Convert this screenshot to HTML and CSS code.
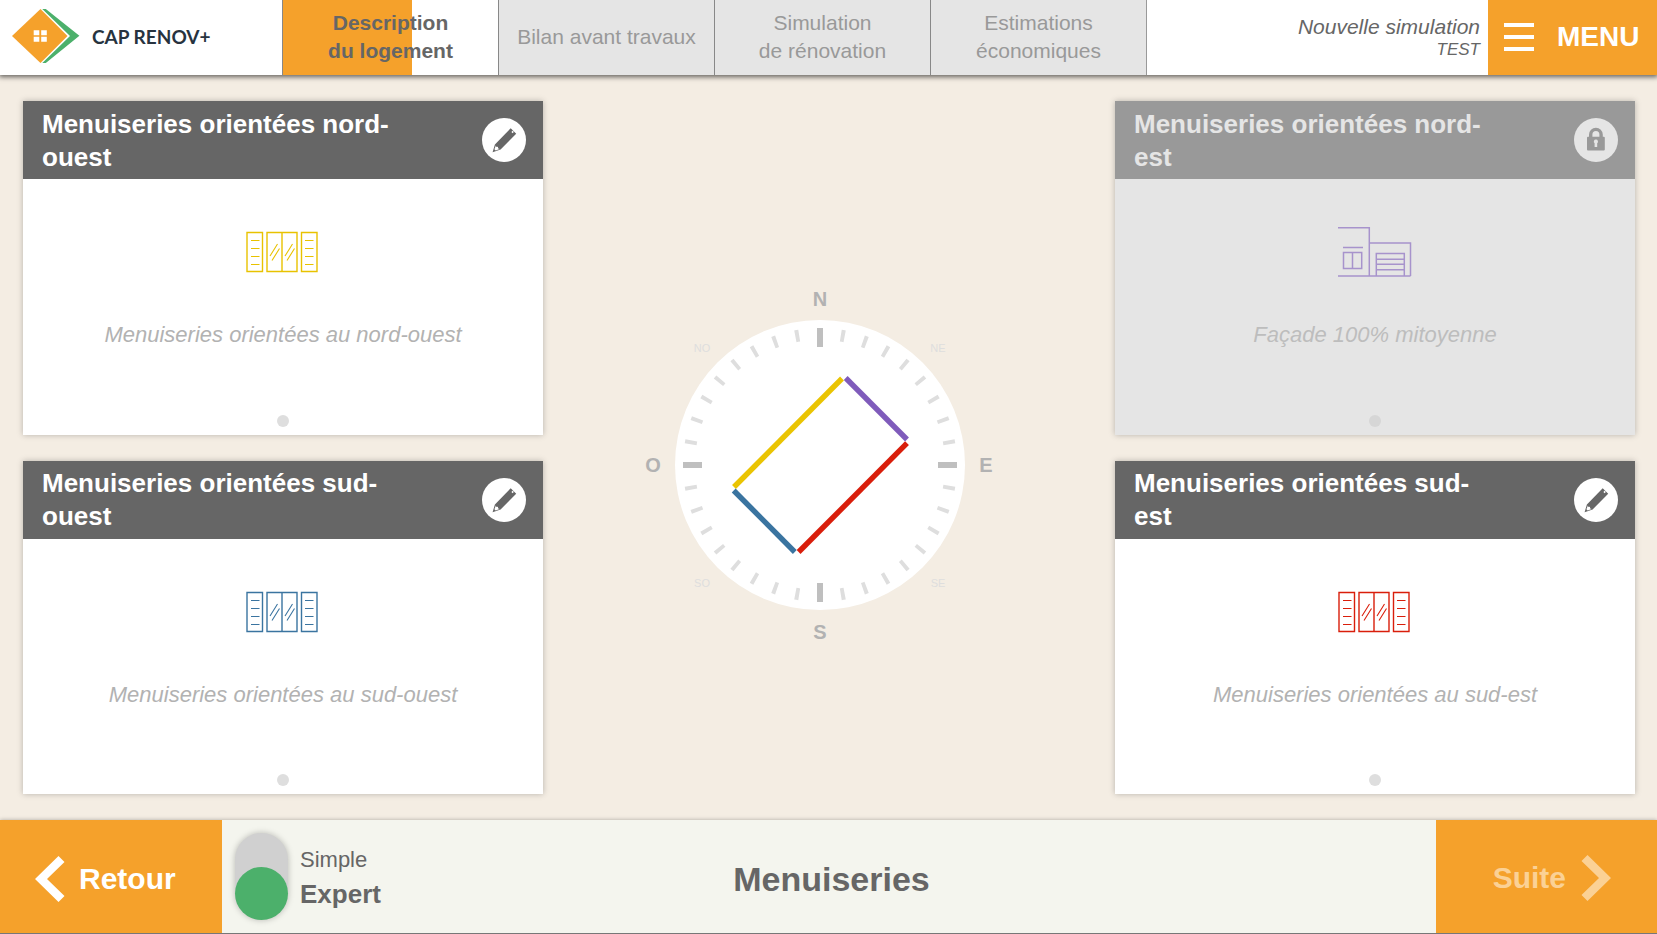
FILE: index.html
```html
<!DOCTYPE html>
<html lang="fr">
<head>
<meta charset="utf-8">
<meta name="viewport" content="width=device-width, initial-scale=1">
<title>CAP RENOV+ – Menuiseries</title>
<link rel="stylesheet" href="styles.css">
</head>
<body>
<svg class="sprite" aria-hidden="true">
  <symbol id="pencil" viewBox="0 0 44 44">
    <path fill="currentColor" fill-rule="evenodd" d="M28.7 10.2 34.2 15.8 18.6 31.6 10.6 34.2 12.9 26.4ZM13.9 27.4 12.4 31.2 13.7 32.5 17.6 31 16.2 30.6 15.9 28.8 14.4 28.9ZM30.6 12.8 29.4 14 30.6 15.2 31.8 14Z"/>
  </symbol>
  <symbol id="lock" viewBox="0 0 44 44">
    <path fill="none" stroke="currentColor" stroke-width="3.4" d="M16.7 20V16.6a5.2 5.2 0 0 1 10.4 0V20"/>
    <path fill="currentColor" fill-rule="evenodd" d="M14 18.8H29.8a1 1 0 0 1 1 1V31.4a1 1 0 0 1-1 1H14a1 1 0 0 1-1-1V19.8a1 1 0 0 1 1-1ZM21.9 21.6a2 2 0 0 0-1.3 3.6V29h2.6V25.2a2 2 0 0 0-1.3-3.6Z"/>
  </symbol>
  <symbol id="window" viewBox="0 0 76 52">
    <g fill="none" stroke="currentColor" stroke-width="1.4">
      <path d="M2 5.5H17.5V44.5H2ZM22 5.5H52V44.5H22ZM37 5.5V44.5M56.5 5.5H72V44.5H56.5Z"/>
      <path stroke-width="1.1" d="M6 13.5h8.5M6 21.5h8.5M6 29.5h8.5M6 37.5h8.5M60 13.5h8.5M60 21.5h8.5M60 29.5h8.5M60 37.5h8.5M25 29 32.5 17M27 33.5 34.5 21.5M40 29 47.5 17M42 33.5 49.5 21.5"/>
    </g>
  </symbol>
  <symbol id="garage" viewBox="0 0 76 52">
    <path fill="none" stroke="currentColor" stroke-width="1.5" d="M1 .8H32.3V49M32.3 16H73.5V49M1 49H73.5M6 20.5H26M6.5 25.5H24.7V41.5H6.5ZM15.5 25.5V41.5M39.3 49V26.5H67.3V49M39.3 32.3H67.3M39.3 37.3H67.3M39.3 42.7H67.3"/>
  </symbol>
</svg>

<header class="topbar">
  <a class="brand" href="#">
    <svg class="brand-logo" viewBox="12 8 68 56" aria-hidden="true">
      <path fill="#f5a12b" d="M40.5 9 67.5 36 40.5 63 12 36Z"/>
      <path fill="#4cb06b" d="M42.3 9H45.8L79.4 35.8 45.8 63H42.3L70 36Z"/>
      <path fill="#fff" d="M33.7 30.3h5.6v5h-5.6ZM41.2 30.3h5.6v5h-5.6ZM33.7 36.7h5.6v5h-5.6ZM41.2 36.7h5.6v5h-5.6Z"/>
    </svg>
    <span class="brand-name">CAP RENOV+</span>
  </a>
  <nav class="tabs">
    <a class="tab tab-active" href="#" aria-current="page">Description<br>du logement</a>
    <a class="tab" href="#">Bilan avant travaux</a>
    <a class="tab" href="#">Simulation<br>de rénovation</a>
    <a class="tab" href="#">Estimations<br>économiques</a>
  </nav>
  <div class="project">
    <span class="project-name">Nouvelle simulation</span>
    <span class="project-client">TEST</span>
  </div>
  <button class="menu-button" type="button">
    <svg class="menu-icon" viewBox="0 0 30 30" aria-hidden="true"><path fill="#fff" d="M0 1h30v4H0ZM0 13h30v4H0ZM0 25h30v4H0Z"/></svg>
    <span>MENU</span>
  </button>
</header>

<main class="board">
  <section class="card card-nw">
    <div class="card-head">
      <h2 class="card-title">Menuiseries orientées nord-ouest</h2>
      <button class="round-button" type="button" aria-label="Modifier"><svg class="round-icon"><use href="#pencil"/></svg></button>
    </div>
    <div class="card-body">
      <svg class="facade-icon yellow"><use href="#window"/></svg>
      <p class="card-text">Menuiseries orientées au nord-ouest</p>
      <span class="page-dot"></span>
    </div>
  </section>

  <section class="card card-ne card-locked">
    <div class="card-head">
      <h2 class="card-title">Menuiseries orientées nord-est</h2>
      <button class="round-button" type="button" aria-label="Verrouillé" disabled><svg class="round-icon"><use href="#lock"/></svg></button>
    </div>
    <div class="card-body">
      <svg class="facade-icon purple"><use href="#garage"/></svg>
      <p class="card-text">Façade 100% mitoyenne</p>
      <span class="page-dot"></span>
    </div>
  </section>

  <div class="compass-area">
    <svg class="compass" viewBox="-180 -180 360 360" role="img" aria-label="Orientation du logement">
      <circle r="145" fill="#fff"/>
      <circle r="131" fill="none" stroke="#dedede" stroke-width="12" pathLength="360" stroke-dasharray="1.7 8.3" stroke-dashoffset="0.85"/>
      <path stroke="#bfbfbf" stroke-width="6" d="M0-137V-118M0 137V118M-137 0H-118M137 0H118"/>
      <g stroke-width="5.4">
        <path stroke="#eac402" d="M-86 22 22-86.5"/>
        <path stroke="#7f5bbb" d="M25.7-87 87-25.5"/>
        <path stroke="#d91e0b" d="M87-21.8-21.4 87"/>
        <path stroke="#3a74a0" d="M-86.3 25.5-25.2 87"/>
      </g>
      <g class="cardinal">
        <text x="0" y="-159">N</text>
        <text x="166" y="7">E</text>
        <text x="0" y="174">S</text>
        <text x="-167" y="7">O</text>
      </g>
      <g class="intercardinal">
        <text x="118" y="-113">NE</text>
        <text x="118" y="122">SE</text>
        <text x="-118" y="122">SO</text>
        <text x="-118" y="-113">NO</text>
      </g>
    </svg>
  </div>

  <section class="card card-sw">
    <div class="card-head">
      <h2 class="card-title">Menuiseries orientées sud-ouest</h2>
      <button class="round-button" type="button" aria-label="Modifier"><svg class="round-icon"><use href="#pencil"/></svg></button>
    </div>
    <div class="card-body">
      <svg class="facade-icon blue"><use href="#window"/></svg>
      <p class="card-text">Menuiseries orientées au sud-ouest</p>
      <span class="page-dot"></span>
    </div>
  </section>

  <section class="card card-se">
    <div class="card-head">
      <h2 class="card-title">Menuiseries orientées sud-est</h2>
      <button class="round-button" type="button" aria-label="Modifier"><svg class="round-icon"><use href="#pencil"/></svg></button>
    </div>
    <div class="card-body">
      <svg class="facade-icon red"><use href="#window"/></svg>
      <p class="card-text">Menuiseries orientées au sud-est</p>
      <span class="page-dot"></span>
    </div>
  </section>
</main>

<footer class="bottombar">
  <button class="step-button step-back" type="button">
    <svg class="chevron" viewBox="0 0 30 46" aria-hidden="true"><path fill="currentColor" d="M23.5 0 29.5 6 12 23 29.5 40 23.5 46 0 23Z"/></svg>
    <span>Retour</span>
  </button>
  <label class="mode">
    <input class="mode-switch" type="checkbox" role="switch" checked>
    <span class="mode-labels">
      <span class="mode-simple">Simple</span>
      <span class="mode-expert">Expert</span>
    </span>
  </label>
  <h1 class="page-title">Menuiseries</h1>
  <button class="step-button step-next" type="button" disabled>
    <span>Suite</span>
    <svg class="chevron" viewBox="0 0 30 46" aria-hidden="true"><path fill="currentColor" d="M6.5 0 .5 6 18 23 .5 40 6.5 46 30 23Z"/></svg>
  </button>
</footer>
</body>
</html>
```

FILE: styles.css
```css
* {
  box-sizing: border-box;
}

body {
  margin: 0;
  min-height: 100vh;
  display: flex;
  flex-direction: column;
  background: #f4ede3;
  color: #666;
  font-family: "Liberation Sans", Arial, sans-serif;
}

button {
  margin: 0;
  padding: 0;
  border: 0;
  font: inherit;
  cursor: pointer;
}

a {
  color: inherit;
  text-decoration: none;
}

.sprite {
  position: absolute;
  width: 0;
  height: 0;
}

/* Top bar */

.topbar {
  display: flex;
  min-height: 75px;
  background: #fff;
  box-shadow: 0 1px 5px 1px rgba(0, 0, 0, 0.6);
}

.brand {
  flex: 0 0 282px;
  display: flex;
  align-items: center;
  gap: 12px;
  padding: 0 12px 3px;
}

.brand-logo {
  width: 68px;
  height: 56px;
}

.brand-name {
  color: #27333f;
  font-family: Lato, sans-serif;
  font-size: 19px;
  font-weight: 700;
}

.tabs {
  flex: 0 1 865px;
  display: grid;
  grid-template-columns: repeat(4, 1fr);
  border-right: 1px solid #999;
}

.tab {
  display: flex;
  align-items: center;
  justify-content: center;
  padding-bottom: 2px;
  border-left: 1px solid #888;
  background: #e5e5e5;
  color: #999;
  font-size: 21px;
  line-height: 28px;
  text-align: center;
}

.tab-active {
  background: linear-gradient(to right, #f5a12b 60%, #fff 60%);
  color: #666;
  font-weight: 700;
}

.project {
  flex: 1;
  display: flex;
  flex-direction: column;
  align-items: flex-end;
  justify-content: center;
  padding-right: 8px;
  font-style: italic;
}

.project-name {
  font-size: 21px;
  line-height: 24px;
}

.project-client {
  font-size: 17px;
  line-height: 22px;
}

.menu-button {
  flex: 0 0 169px;
  display: flex;
  align-items: center;
  gap: 23px;
  padding: 0 16px 2px;
  background: #f5a12b;
  color: #fff;
  font-size: 28px;
  font-weight: 700;
}

.menu-icon {
  width: 30px;
  height: 30px;
}

/* Board */

.board {
  flex: 1;
  display: grid;
  grid-template-columns: 520fr 572fr 520fr;
  grid-template-rows: 1fr 1fr;
  grid-template-areas:
    "nw compass ne"
    "sw compass se";
  row-gap: 26px;
  padding: 26px 22px 26px 23px;
}

.card-nw { grid-area: nw; }
.card-ne { grid-area: ne; }
.card-sw { grid-area: sw; }
.card-se { grid-area: se; }

.card {
  display: flex;
  flex-direction: column;
  background: #fff;
  box-shadow: 0 0 6px rgba(0, 0, 0, 0.25);
}

.card-head {
  display: flex;
  align-items: center;
  min-height: 78px;
  padding: 0 17px 0 19px;
  background: #666;
  color: #fff;
}

.card-title {
  flex: 1;
  margin: 0;
  padding: 1px 80px 0 0;
  font-size: 26px;
  line-height: 33px;
}

.round-button {
  flex: none;
  width: 44px;
  height: 44px;
  border-radius: 50%;
  background: #fff;
  color: #666;
}

.round-icon {
  display: block;
  width: 44px;
  height: 44px;
}

.card-body {
  flex: 1;
  display: flex;
  flex-direction: column;
  align-items: center;
  padding: 48px 16px 8px;
}

.facade-icon {
  width: 76px;
  height: 52px;
}

.yellow { color: #e8c200; }
.purple { color: #a793cc; }
.blue { color: #3a74a0; }
.red { color: #d91e0b; }

.card-text {
  margin: 42px 0 0;
  color: #b2b2b2;
  font-size: 22px;
  font-style: italic;
  line-height: 28px;
}

.page-dot {
  width: 12px;
  height: 12px;
  margin-top: auto;
  border-radius: 50%;
  background: #dedede;
}

.card-locked {
  background: #e5e5e5;
}

.card-locked .card-head {
  background: #999;
  color: #e5e5e5;
}

.card-locked .round-button {
  background: #e5e5e5;
  color: #999;
}

.card-locked .card-text {
  color: #bdbdbd;
}

.card-locked .page-dot {
  background: #d6d6d6;
}

/* Compass */

.compass-area {
  grid-area: compass;
  display: flex;
  align-items: center;
  justify-content: center;
  padding: 35px 18px 0 0;
}

.compass {
  width: 360px;
  height: 360px;
}

.compass text {
  text-anchor: middle;
}

.cardinal {
  fill: #b2b2b2;
  font-size: 20px;
  font-weight: 700;
}

.intercardinal {
  fill: #dedede;
  font-size: 11px;
}

/* Bottom bar */

.bottombar {
  display: grid;
  grid-template-columns: 222px 1fr auto 1fr 221px;
  min-height: 114px;
  border-bottom: 1px solid #777;
  background: #f4f5ee;
  box-shadow: 0 0 4px rgba(0, 0, 0, 0.3);
}

.step-button {
  display: flex;
  align-items: center;
  background: #f5a12b;
  color: #fff;
  font-size: 30px;
  font-weight: 700;
}

.step-back {
  gap: 14px;
  padding: 4px 0 0 35px;
}

.step-next {
  grid-column: 5;
  justify-content: flex-end;
  gap: 15px;
  padding: 3px 46px 0 0;
  color: #fbd195;
}

.chevron {
  width: 30px;
  height: 46px;
}

.mode {
  display: flex;
  align-items: center;
  gap: 12px;
  padding-left: 13px;
  cursor: pointer;
}

.mode-switch {
  appearance: none;
  display: flex;
  width: 53px;
  height: 87px;
  margin: 0;
  border-radius: 27px;
  background: #d0d0d0;
  box-shadow: 0 0 6px rgba(0, 0, 0, 0.25);
}

.mode-switch::before {
  content: "";
  width: 53px;
  height: 53px;
  border-radius: 50%;
  background: #4cb06b;
}

.mode-switch:checked::before {
  align-self: flex-end;
}

.mode-labels {
  display: flex;
  flex-direction: column;
  line-height: 35px;
}

.mode-simple {
  font-size: 22px;
}

.mode-expert {
  font-size: 26px;
  font-weight: 700;
}

.page-title {
  align-self: center;
  margin: 0;
  padding: 5px 0 0 5px;
  font-size: 34px;
}
```
